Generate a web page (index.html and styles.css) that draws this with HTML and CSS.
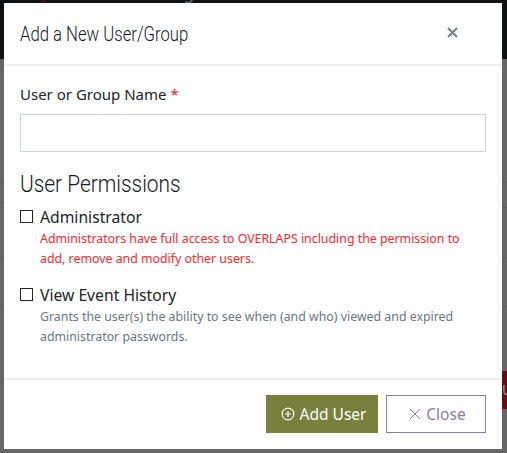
FILE: index.html
```html
<!DOCTYPE html>
<html lang="en">
<head>
<meta charset="utf-8">
<title>Add a New User/Group</title>
<link rel="stylesheet" href="styles.css">
</head>
<body>
<div class="page">
  <header class="topbar">
    <span class="top-item top-mark">V</span>
    <span class="top-tick"></span>
    <span class="top-item top-search">Search</span>
    <span class="top-item top-config">Config</span>
  </header>
  <div class="rows">
    <div class="row row-a"></div>
    <div class="row row-b"></div>
    <div class="row row-c"></div>
    <div class="row row-d"></div>
    <div class="red-btn"><span>U</span></div>
  </div>
</div>
<div class="modal" role="dialog">
  <div class="modal-header">
    <h2 class="modal-title">Add a New User/Group</h2>
    <svg class="close-x" viewBox="0 0 11 11" width="11" height="11" aria-hidden="true"><path d="M1 1L10 10M10 1L1 10"/></svg>
  </div>
  <div class="modal-body">
    <label class="field-label">User or Group Name <span class="req">*</span></label>
    <input class="text-input" type="text">
    <h3 class="section-title">User Permissions</h3>
    <div class="perm perm-admin">
      <div class="check-line"><span class="box"></span><span class="perm-name">Administrator</span></div>
      <p class="perm-desc danger">Administrators have full access to OVERLAPS including the permission to add, remove and modify other users.</p>
    </div>
    <div class="perm">
      <div class="check-line"><span class="box"></span><span class="perm-name">View Event History</span></div>
      <p class="perm-desc">Grants the user(s) the ability to see when (and who) viewed and expired administrator passwords.</p>
    </div>
  </div>
  <div class="modal-footer">
    <button class="btn btn-add" type="button">
      <svg viewBox="0 0 14 14" width="14" height="14" aria-hidden="true"><circle cx="7" cy="7" r="5.9"/><path d="M7 4v6M4 7h6"/></svg>
      Add User
    </button>
    <button class="btn btn-close" type="button">
      <svg viewBox="0 0 12 12" width="12" height="12" aria-hidden="true"><path d="M1 1L11 11M11 1L1 11"/></svg>
      Close
    </button>
  </div>
</div>
</body>
</html>
```
FILE: styles.css
```css
* { box-sizing: border-box; }
html, body { margin: 0; height: 100%; overflow: hidden; }
body {
  background: #666;
  font-family: "Noto Sans", "Open Sans", sans-serif;
  color: #212529;
}
.page { height: 453px; display: flex; flex-direction: column; }
.topbar {
  height: 59px;
  background: #0e1011;
  display: flex;
  font-size: 18px;
  line-height: 18px;
  color: #6b6b6b;
}
.top-item { margin-top: -17px; height: 18px; }
.top-mark { width: 43px; }
.top-tick { width: 1px; height: 3px; background: #7a1515; margin-right: 8px; }
.top-search { width: 87px; }
.rows { flex: 1; position: relative; }
.row { border-bottom: 1px solid #5c5c5c; }
.row-a { height: 124px; }
.row-b { height: 25px; }
.row-c { height: 50px; }
.row-d { height: 49px; }
.red-btn {
  position: absolute;
  top: 312px; right: 0;
  width: 5px; height: 38px;
  background: #6d0a0a;
  color: #999;
  font-size: 14px;
  overflow: hidden;
  line-height: 38px;
}
.modal {
  position: absolute;
  left: 4px; top: 3px;
  width: 498px; height: 446px;
  background: #fff;
  display: flex;
  flex-direction: column;
}
.modal-header {
  height: 63px;
  border-bottom: 2px solid #eceef0;
  display: flex;
  align-items: center;
  justify-content: space-between;
  padding: 0 44px 0 16px;
  flex: none;
}
.modal-title {
  margin: 0;
  font-family: "Roboto", sans-serif;
  font-weight: 300;
  font-size: 20px;
  line-height: 24px;
  color: #15191d;
  transform: scaleX(.835);
  transform-origin: left center;
}
.close-x { fill: none; stroke: #7b8087; stroke-width: 2.2; margin-top: -3px; }
.modal-body { flex: 1; padding: 17px 16px 0; }
.field-label {
  display: block;
  font-size: 15px;
  line-height: 22px;
  color: #212529;
}
.req { color: #e8232a; }
.text-input {
  display: block;
  width: 100%;
  height: 38px;
  margin-top: 9px;
  border: 1px solid #ced4da;
  background: #fff;
  outline: none;
}
.section-title {
  margin: 18px 0 0;
  font-family: "Roboto", sans-serif;
  font-weight: 300;
  font-size: 24px;
  line-height: 28px;
  color: #15191d;
  transform: scaleX(.87);
  transform-origin: left center;
}
.perm { margin-top: 9px; }
.perm + .perm { margin-top: 16px; }
.check-line { display: flex; align-items: center; height: 21px; }
.box {
  width: 13px; height: 13px;
  border: 1px solid #212529;
  margin: -2px 7px 0 0;
  background: #fff;
  flex: none;
}
.perm-name { font-size: 15.7px; line-height: 21px; color: #212529; }
.perm-desc {
  margin: 1px 0 0 20px;
  font-size: 12.35px;
  line-height: 20px;
  color: #6c757d;
}
.danger { color: #f8282d; }
.modal-footer {
  height: 71px;
  flex: none;
  border-top: 2px solid #eeeeee;
  display: flex;
  justify-content: flex-end;
  align-items: flex-start;
  gap: 8px;
  padding: 15px 16px 0;
}
.btn {
  height: 38px;
  display: inline-flex;
  align-items: center;
  justify-content: center;
  gap: 5px;
  font-family: inherit;
  font-size: 15.5px;
  padding: 0 0 0 3px;
}
.btn-add {
  width: 112px;
  background: #78803c;
  border: 1px solid #78803c;
  color: #fff;
}
.btn-add svg { fill: none; stroke: #fff; stroke-width: 1.2; }
.btn-close {
  width: 100px;
  background: #fff;
  border: 1px solid #8a7f9c;
  color: #8a7f9c;
}
.btn-close svg { fill: none; stroke: #8a7f9c; stroke-width: 1; }
```
